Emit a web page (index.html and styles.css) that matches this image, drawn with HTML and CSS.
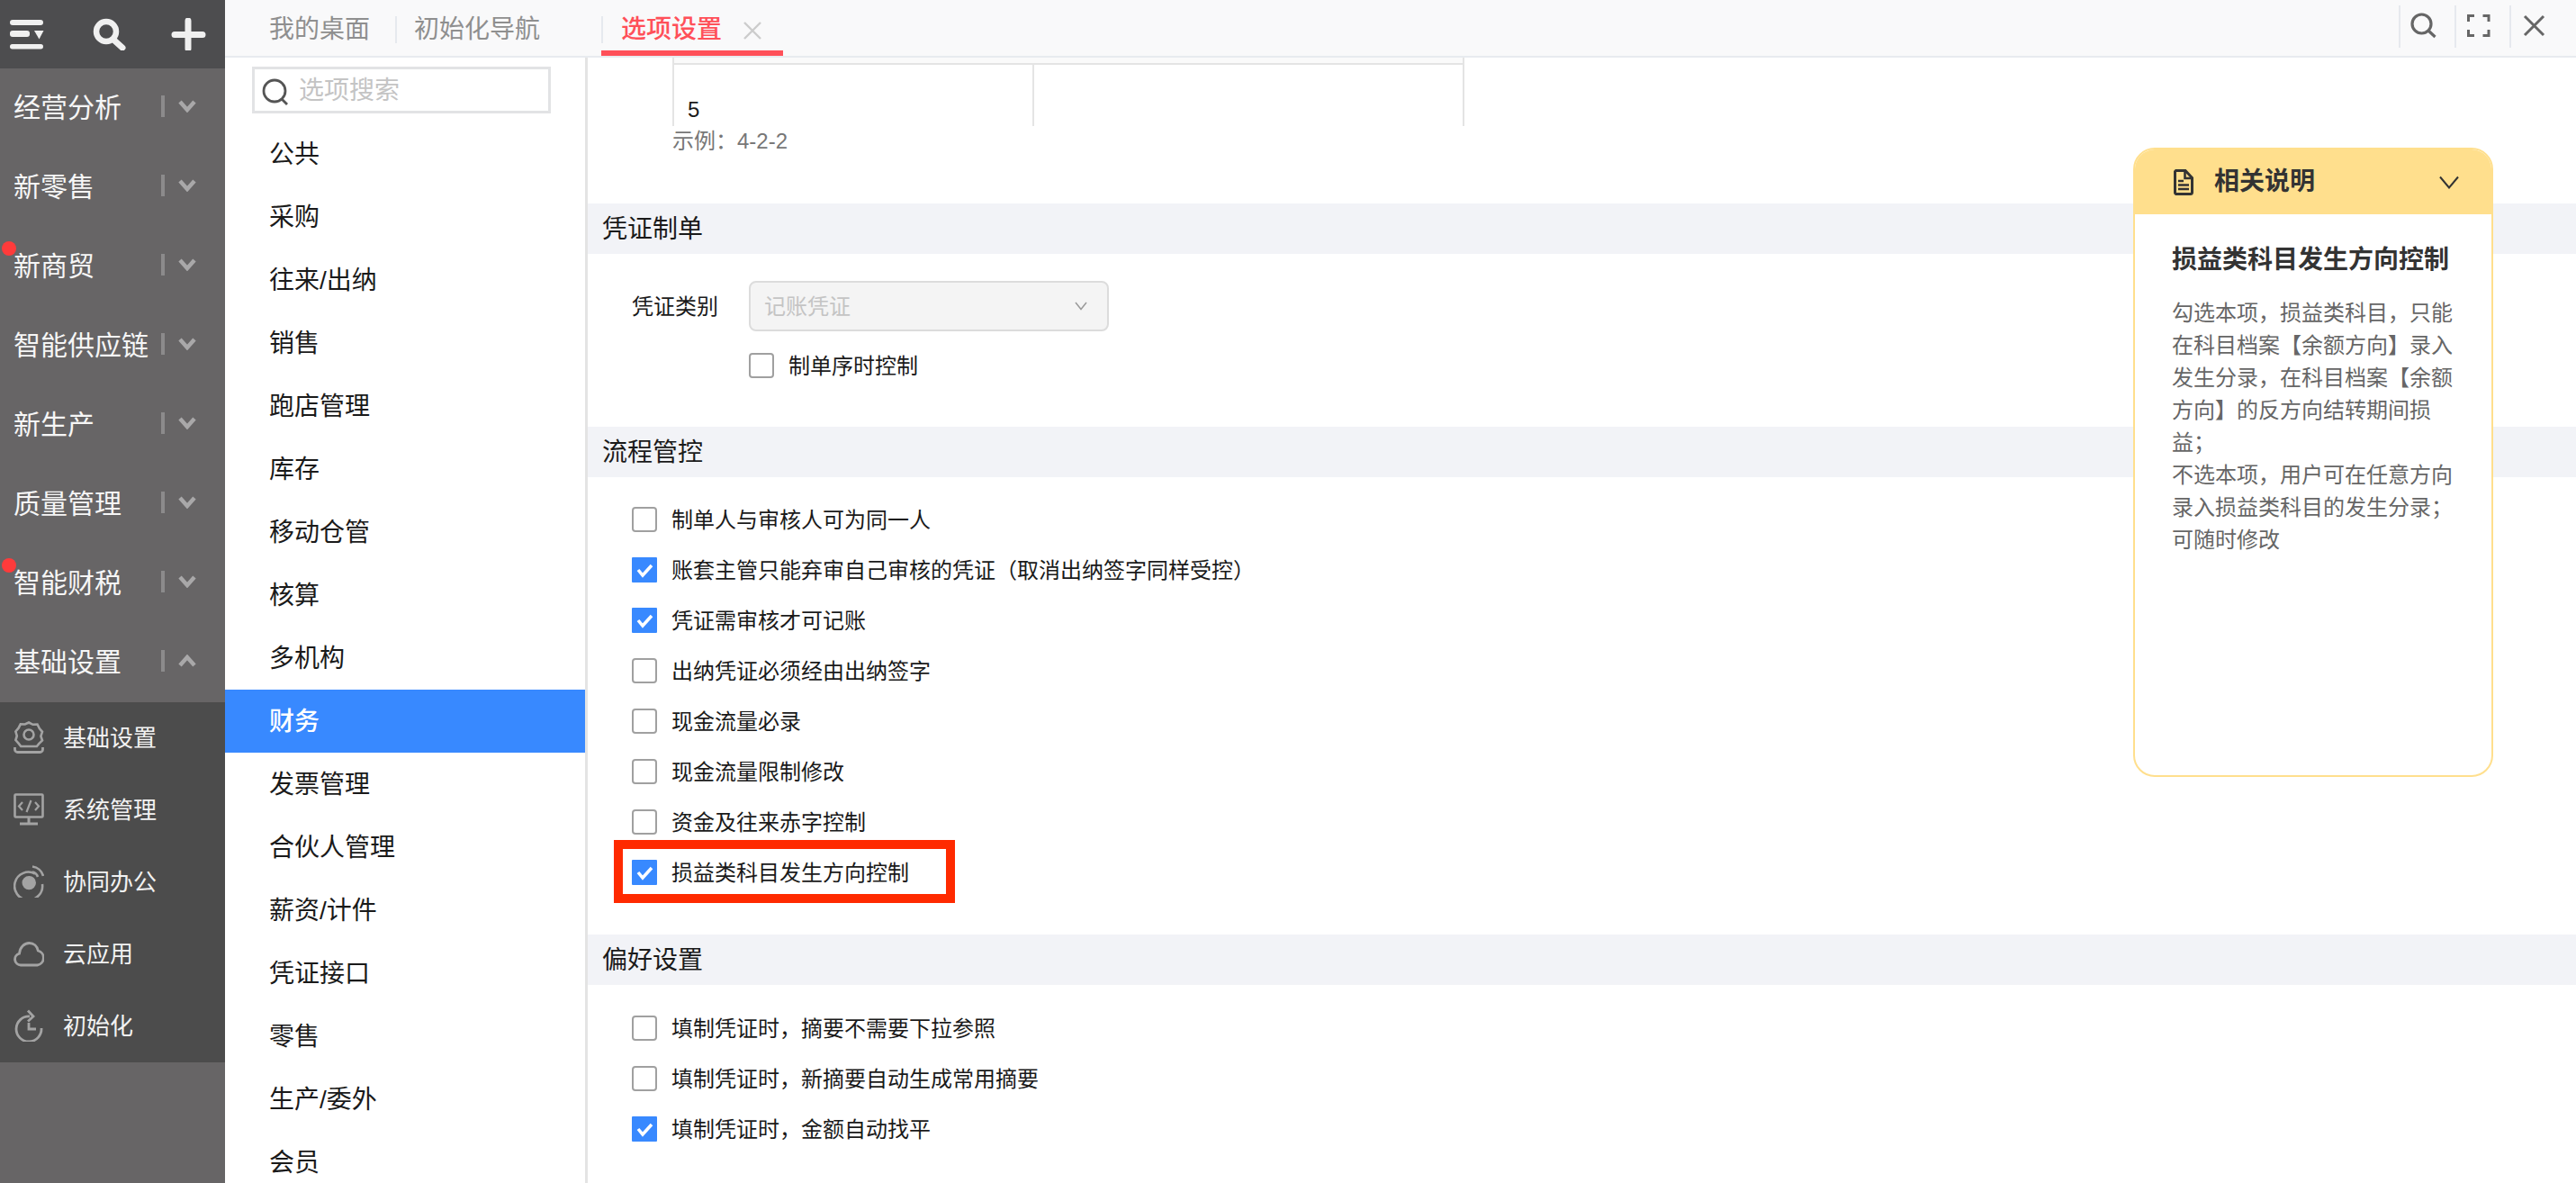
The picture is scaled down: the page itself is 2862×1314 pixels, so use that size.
FILE: index.html
```html
<!DOCTYPE html>
<html lang="zh-CN">
<head>
<meta charset="utf-8">
<title>选项设置</title>
<link rel="stylesheet" href="styles.css">
</head>
<body>
<div class="app">
  <aside class="sidebar">
    <div class="side-top">
      <svg class="top-icon" viewBox="0 0 40 36"><g fill="#f0f0f0"><rect x="1" y="2" width="37" height="6" rx="3"/><rect x="1" y="14" width="22" height="7" rx="3"/><rect x="1" y="29" width="37" height="5.500" rx="2.700"/><path d="M28 14h10.500l-5 9.500z"/></g></svg>
      <svg class="top-icon" viewBox="0 0 40 36"><circle cx="18" cy="15" r="11" fill="none" stroke="#f0f0f0" stroke-width="6.500"/><path d="M26 24l10 9" stroke="#f0f0f0" stroke-width="7" stroke-linecap="round"/></svg>
      <svg class="top-icon" viewBox="0 0 40 36"><path d="M19 3v31M4 18.500h31" stroke="#f0f0f0" stroke-width="7" stroke-linecap="round"/></svg>
    </div>
    <div class="menu-row"><span class="menu-label">经营分析</span><i class="menu-sep"></i><svg class="menu-chev" viewBox="0 0 20 14"><path d="M2 2l8 9 8-9" fill="none" stroke="#a9a8a9" stroke-width="4.500"/></svg></div>
    <div class="menu-row"><span class="menu-label">新零售</span><i class="menu-sep"></i><svg class="menu-chev" viewBox="0 0 20 14"><path d="M2 2l8 9 8-9" fill="none" stroke="#a9a8a9" stroke-width="4.500"/></svg></div>
    <div class="menu-row has-dot"><span class="menu-label">新商贸</span><i class="menu-sep"></i><svg class="menu-chev" viewBox="0 0 20 14"><path d="M2 2l8 9 8-9" fill="none" stroke="#a9a8a9" stroke-width="4.500"/></svg></div>
    <div class="menu-row"><span class="menu-label">智能供应链</span><i class="menu-sep"></i><svg class="menu-chev" viewBox="0 0 20 14"><path d="M2 2l8 9 8-9" fill="none" stroke="#a9a8a9" stroke-width="4.500"/></svg></div>
    <div class="menu-row"><span class="menu-label">新生产</span><i class="menu-sep"></i><svg class="menu-chev" viewBox="0 0 20 14"><path d="M2 2l8 9 8-9" fill="none" stroke="#a9a8a9" stroke-width="4.500"/></svg></div>
    <div class="menu-row"><span class="menu-label">质量管理</span><i class="menu-sep"></i><svg class="menu-chev" viewBox="0 0 20 14"><path d="M2 2l8 9 8-9" fill="none" stroke="#a9a8a9" stroke-width="4.500"/></svg></div>
    <div class="menu-row has-dot"><span class="menu-label">智能财税</span><i class="menu-sep"></i><svg class="menu-chev" viewBox="0 0 20 14"><path d="M2 2l8 9 8-9" fill="none" stroke="#a9a8a9" stroke-width="4.500"/></svg></div>
    <div class="menu-row"><span class="menu-label">基础设置</span><i class="menu-sep"></i><svg class="menu-chev" viewBox="0 0 20 14"><path d="M2 12l8-9 8 9" fill="none" stroke="#a9a8a9" stroke-width="4.500"/></svg></div>
    <div class="submenu">
      <div class="sub-row">
        <svg class="sub-icon" viewBox="0 0 34 36"><g fill="none" stroke="#a3a3a3" stroke-width="2.600"><path d="M17 1.500l4.500 2.300 5-.3 2.300 4.500 3.200 3.800-1.600 4.900 1.600 4.800-3.800 3.600-2.300 2.900H8.200l-2.600-3.400-3.200-3.600 1.400-4.600-1.400-4.900 3.200-3.800 2.200-4.400 5 .2z"/><circle cx="17" cy="15" r="5.500"/><path d="M1.500 29v2.500a3 3 0 0 0 3 3h25a3 3 0 0 0 3-3V29" stroke-width="2.800"/></g></svg>
        <span>基础设置</span>
      </div>
      <div class="sub-row">
        <svg class="sub-icon" viewBox="0 0 34 36"><g fill="none" stroke="#a3a3a3" stroke-width="2.600"><rect x="1.500" y="1.500" width="31" height="25" rx="1"/><path d="M17 27v6M7 34h20" stroke-width="3"/><path d="M10 10l-4 4.500 4 4.500M24 10l4 4.500-4 4.500M19.500 8l-5 13" stroke-width="2.200"/></g></svg>
        <span>系统管理</span>
      </div>
      <div class="sub-row">
        <svg class="sub-icon" viewBox="0 0 34 36"><g fill="none" stroke="#a3a3a3" stroke-width="2.600"><path d="M24 9.500A15.500 15.500 0 1 0 32 21"/><path d="M21 1.500A14 14 0 0 1 33 12"/><path d="M21 7.500A8 8 0 0 1 27 13"/></g><path d="M17 12A7.500 7.500 0 0 1 25 19.500 7.500 7.500 0 1 1 9.500 19.500 7.500 7.500 0 0 1 17 12z" fill="#a3a3a3"/></svg>
        <span>协同办公</span>
      </div>
      <div class="sub-row">
        <svg class="sub-icon" viewBox="0 0 34 36"><path d="M8 31a6.500 6.500 0 0 1-1.500-12.800C7 11 12 6.500 17.500 6.500c5 0 8.800 3.500 9.800 8.500a8.200 8.200 0 0 1-.8 16z" fill="none" stroke="#a3a3a3" stroke-width="2.800"/></svg>
        <span>云应用</span>
      </div>
      <div class="sub-row">
        <svg class="sub-icon" viewBox="0 0 34 36"><g fill="none" stroke="#a3a3a3" stroke-width="2.800"><path d="M18 8A14 14 0 1 0 31 21"/><path d="M16 1.500L22 8l-6 5.500"/><path d="M17 15v7h8"/></g></svg>
        <span>初始化</span>
      </div>
    </div>
  </aside>
  <div class="workspace">
    <header class="tabbar">
      <div class="tab tab-first">我的桌面</div>
      <i class="tab-sep"></i>
      <div class="tab tab-second">初始化导航</div>
      <div class="tab tab-active">
        <span>选项设置</span>
        <svg class="tab-close" viewBox="0 0 20 20"><path d="M1 1l18 18M19 1L1 19" stroke="#cccccc" stroke-width="2.400"/></svg>
      </div>
      <div class="tools">
        <div class="tool"><svg viewBox="0 0 30 30"><circle cx="12.500" cy="12.500" r="10.500" fill="none" stroke="#666" stroke-width="3.200"/><path d="M20.500 20.500l7 6.500" stroke="#666" stroke-width="3.200"/></svg></div>
        <div class="tool"><svg viewBox="0 0 30 30"><path d="M9 3.500H2.500V10M18.500 3.500H25V10M25 19v6.500h-6.500M9 25.500H2.500V19" fill="none" stroke="#666" stroke-width="3"/></svg></div>
        <div class="tool"><svg viewBox="0 0 30 30"><path d="M4 4l21 21M25 4L4 25" stroke="#666" stroke-width="3"/></svg></div>
      </div>
    </header>
    <div class="content">
      <div class="watermarks" aria-hidden="true">
        <div class="wm"><span>袁芊芊8210</span><span class="wm-b">08211022</span></div><div class="wm"><span>袁芊芊8210</span><span class="wm-b">08211022</span></div><div class="wm"><span>袁芊芊8210</span><span class="wm-b">08211022</span></div><div class="wm"><span>袁芊芊8210</span><span class="wm-b">08211022</span></div><div class="wm"><span>袁芊芊8210</span><span class="wm-b">08211022</span></div>
        <div class="wm"><span>袁芊芊8210</span><span class="wm-b">08211022</span></div><div class="wm"><span>袁芊芊8210</span><span class="wm-b">08211022</span></div><div class="wm"><span>袁芊芊8210</span><span class="wm-b">08211022</span></div><div class="wm"><span>袁芊芊8210</span><span class="wm-b">08211022</span></div><div class="wm"><span>袁芊芊8210</span><span class="wm-b">08211022</span></div>
        <div class="wm"><span>袁芊芊8210</span><span class="wm-b">08211022</span></div><div class="wm"><span>袁芊芊8210</span><span class="wm-b">08211022</span></div><div class="wm"><span>袁芊芊8210</span><span class="wm-b">08211022</span></div><div class="wm"><span>袁芊芊8210</span><span class="wm-b">08211022</span></div><div class="wm"><span>袁芊芊8210</span><span class="wm-b">08211022</span></div>
        <div class="wm"><span>袁芊芊8210</span><span class="wm-b">08211022</span></div><div class="wm"><span>袁芊芊8210</span><span class="wm-b">08211022</span></div><div class="wm"><span>袁芊芊8210</span><span class="wm-b">08211022</span></div><div class="wm"><span>袁芊芊8210</span><span class="wm-b">08211022</span></div><div class="wm"><span>袁芊芊8210</span><span class="wm-b">08211022</span></div>
        <div class="wm"><span>袁芊芊8210</span><span class="wm-b">08211022</span></div><div class="wm"><span>袁芊芊8210</span><span class="wm-b">08211022</span></div><div class="wm"><span>袁芊芊8210</span><span class="wm-b">08211022</span></div><div class="wm"><span>袁芊芊8210</span><span class="wm-b">08211022</span></div><div class="wm"><span>袁芊芊8210</span><span class="wm-b">08211022</span></div>
      </div>
      <nav class="catalog">
        <div class="search-box">
          <svg class="search-icon" viewBox="0 0 30 30"><circle cx="14" cy="14" r="12" fill="none" stroke="#555" stroke-width="2.800"/><path d="M22 23l6 6" stroke="#555" stroke-width="2.800"/></svg>
          <span class="placeholder">选项搜索</span>
        </div>
        <ul class="catalog-list">
          <li>公共</li><li>采购</li><li>往来/出纳</li><li>销售</li><li>跑店管理</li><li>库存</li><li>移动仓管</li><li>核算</li><li>多机构</li>
          <li class="current">财务</li>
          <li>发票管理</li><li>合伙人管理</li><li>薪资/计件</li><li>凭证接口</li><li>零售</li><li>生产/委外</li><li>会员</li>
        </ul>
      </nav>
      <main class="options">
        <div class="table-frag">
          <div class="frag-head"></div>
          <div class="frag-cell frag-first">5</div>
          <div class="frag-cell"></div>
        </div>
        <div class="example">示例：4-2-2</div>

        <h2 class="band">凭证制单</h2>
        <section class="voucher">
          <div class="field">
            <label class="field-label">凭证类别</label>
            <div class="select"><span class="select-text">记账凭证</span><svg viewBox="0 0 14 10"><path d="M1 1l6 7.500L13 1" fill="none" stroke="#999" stroke-width="1.500"/></svg></div>
          </div>
          <div class="check-row field-check"><span class="cb"></span><span class="cb-text">制单序时控制</span></div>
        </section>

        <h2 class="band">流程管控</h2>
        <section class="checks checks-flow">
          <div class="check-row"><span class="cb"></span><span class="cb-text">制单人与审核人可为同一人</span></div>
          <div class="check-row"><span class="cb on"><svg viewBox="0 0 28 28"><path d="M7 14l5 6L22 9" fill="none" stroke="#fff" stroke-width="3.500"/></svg></span><span class="cb-text">账套主管只能弃审自己审核的凭证（取消出纳签字同样受控）</span></div>
          <div class="check-row"><span class="cb on"><svg viewBox="0 0 28 28"><path d="M7 14l5 6L22 9" fill="none" stroke="#fff" stroke-width="3.500"/></svg></span><span class="cb-text">凭证需审核才可记账</span></div>
          <div class="check-row"><span class="cb"></span><span class="cb-text">出纳凭证必须经由出纳签字</span></div>
          <div class="check-row"><span class="cb"></span><span class="cb-text">现金流量必录</span></div>
          <div class="check-row"><span class="cb"></span><span class="cb-text">现金流量限制修改</span></div>
          <div class="check-row"><span class="cb"></span><span class="cb-text">资金及往来赤字控制</span></div>
          <div class="check-row marked"><span class="cb on"><svg viewBox="0 0 28 28"><path d="M7 14l5 6L22 9" fill="none" stroke="#fff" stroke-width="3.500"/></svg></span><span class="cb-text">损益类科目发生方向控制</span></div>
        </section>

        <h2 class="band">偏好设置</h2>
        <section class="checks checks-pref">
          <div class="check-row"><span class="cb"></span><span class="cb-text">填制凭证时，摘要不需要下拉参照</span></div>
          <div class="check-row"><span class="cb"></span><span class="cb-text">填制凭证时，新摘要自动生成常用摘要</span></div>
          <div class="check-row"><span class="cb on"><svg viewBox="0 0 28 28"><path d="M7 14l5 6L22 9" fill="none" stroke="#fff" stroke-width="3.500"/></svg></span><span class="cb-text">填制凭证时，金额自动找平</span></div>
        </section>
      </main>
      <aside class="help-card">
        <div class="help-head">
          <svg class="help-doc" viewBox="0 0 22 29"><path d="M2.500 1.500h10.500l7.500 8v16a2 2 0 0 1-2 2h-16a2 2 0 0 1-1-2v-23z" fill="none" stroke="#333" stroke-width="3"/><path d="M12.500 2v8h8M5 13h6M5 17.500h12M5 22h12" fill="none" stroke="#333" stroke-width="2.600"/></svg>
          <span class="help-title">相关说明</span>
          <svg class="help-chev" viewBox="0 0 22 15"><path d="M1 1.500l10 12 10-12" fill="none" stroke="#333" stroke-width="2"/></svg>
        </div>
        <div class="help-body">
          <h3>损益类科目发生方向控制</h3>
          <p>勾选本项，损益类科目，只能在科目档案【余额方向】录入发生分录，在科目档案【余额方向】的反方向结转期间损益；<br>不选本项，用户可在任意方向录入损益类科目的发生分录；<br>可随时修改</p>
        </div>
      </aside>
    </div>
  </div>
</div>
</body>
</html>
```

FILE: styles.css
```css
* { box-sizing: border-box; }
html, body { margin: 0; padding: 0; height: 100%; }
body {
  font-family: "Liberation Sans", "Noto Sans CJK SC", sans-serif;
  background: #fff;
  color: #1a1a1a;
  overflow: hidden;
}
h2, h3, p, ul { margin: 0; padding: 0; font-weight: normal; }
ul { list-style: none; }
i { display: block; }

.app { display: flex; width: 2862px; height: 1314px; overflow: hidden; }

/* sidebar */
.sidebar { width: 250px; flex: none; background: #676566; color: #fff; }
.side-top {
  height: 76px;
  background: #4d4d4f;
  display: flex;
  align-items: center;
  gap: 50px;
  padding: 0 0 0 10px;
}
.top-icon { width: 40px; height: 36px; flex: none; }
.menu-row {
  position: relative;
  height: 88px;
  display: flex;
  align-items: center;
  padding: 0 32px 4px 15px;
  font-size: 30px;
  line-height: 40px;
}
.menu-label { flex: 1; white-space: nowrap; color: #f6f6f6; padding-top: 4px; }
.menu-sep { width: 4px; height: 24px; background: #8c8b8c; margin-right: 15px; }
.menu-chev { width: 20px; height: 14px; flex: none; }
.has-dot::before {
  content: "";
  position: absolute;
  left: 2px;
  top: 16px;
  width: 16px;
  height: 16px;
  border-radius: 50%;
  background: #ff3b3b;
}
.submenu { background: #4c4c4c; }
.sub-row {
  height: 80px;
  display: flex;
  align-items: center;
  gap: 21px;
  padding-left: 15px;
  font-size: 26px;
  color: #f2f2f2;
  padding-bottom: 2px;
}
.sub-row span { padding-bottom: 4px; }
.sub-icon { width: 34px; height: 36px; flex: none; }

/* tabs */
.workspace { flex: 1; min-width: 0; display: flex; flex-direction: column; }
.tabbar {
  height: 64px;
  flex: none;
  display: flex;
  background: #f9f9fa;
  border-bottom: 2px solid #e8ebef;
  font-size: 28px;
  color: #8f8f8f;
}
.tab { height: 62px; line-height: 66px; white-space: nowrap; }
.tab-first { padding: 0 28px 0 49px; }
.tab-sep { width: 2px; height: 30px; margin-top: 18px; background: #e6e9ee; }
.tab-second { padding: 0 68px 0 19px; }
.tab-active {
  position: relative;
  width: 202px;
  padding-left: 22px;
  display: flex;
  color: #ff5059;
  border-bottom: 6px solid #ff5059;
  font-weight: 500;
}
.tab-active::before {
  content: "";
  position: absolute;
  left: 0;
  top: 18px;
  width: 2px;
  height: 30px;
  background: #e6e9ee;
}
.tab-close { width: 20px; height: 20px; margin: 24px 0 0 24px; flex: none; }
.tools { margin-left: auto; display: flex; height: 47px; margin-top: 6px; }
.tool { border-left: 2px solid #e6e9ee; padding: 8px 0 0 11px; }
.tool:nth-child(1) { width: 62px; }
.tool:nth-child(2) { width: 61px; }
.tool:nth-child(3) { width: 74px; }
.tool svg { width: 30px; height: 30px; display: block; }

/* content */
.content { position: relative; flex: 1; min-height: 0; display: flex; overflow: hidden; }
.watermarks {
  position: absolute;
  left: -332px;
  top: -23px;
  z-index: 1;
  display: grid;
  grid-template-columns: repeat(5, 620px);
  grid-auto-rows: 260px;
  pointer-events: none;
}
.wm {
  justify-self: end;
  width: max-content;
  height: 132px;
  transform: rotate(-20deg);
  transform-origin: 100% 0;
  text-align: right;
  font-size: 40px;
  line-height: 66px;
  color: rgba(0, 0, 0, 0.025);
  white-space: nowrap;
}
.wm span { display: block; }
.wm-b { padding-right: 22px; }

.catalog {
  width: 403px;
  flex: none;
  border-right: 3px solid #e4e4e4;
  padding-top: 10px;
}
.search-box {
  width: 332px;
  height: 52px;
  margin-left: 30px;
  border: 3px solid #e2e3e5;
  display: flex;
  align-items: center;
  gap: 11px;
  padding-left: 8px;
  font-size: 28px;
  color: #c4c4c4;
}
.placeholder { padding-bottom: 4px; }
.search-icon { width: 30px; height: 30px; flex: none; margin-top: 3px; }
.catalog-list { margin-top: 10px; }
.catalog-list li {
  height: 70px;
  line-height: 72px;
  padding-left: 49px;
  font-size: 28px;
  color: #1a1a1a;
}
.catalog-list .current { background: #3889ff; color: #fff; font-weight: 500; }

.options { flex: 1; min-width: 0; }
.table-frag {
  width: 880px;
  height: 76px;
  margin-left: 94px;
  display: grid;
  grid-template-columns: 400px 1fr;
  grid-template-rows: 8px 1fr;
  border-left: 2px solid #e4e4e4;
  border-right: 2px solid #e4e4e4;
  font-size: 24px;
  color: #1a1a1a;
}
.frag-head { grid-column: 1 / 3; border-bottom: 2px solid #e4e4e4; background: #fafafa; }
.frag-cell { padding: 35px 0 0 15px; line-height: 30px; }
.frag-first { border-right: 2px solid #e4e4e4; }
.example {
  height: 86px;
  padding: 0 0 0 94px;
  font-size: 24px;
  line-height: 34px;
  color: #777;
}
.band {
  height: 56px;
  padding-left: 16px;
  background: #f2f3f7;
  font-size: 28px;
  line-height: 58px;
  color: #1a1a1a;
}
.voucher { height: 192px; padding: 30px 0 0 49px; }
.field { display: flex; align-items: center; height: 56px; }
.field-label { width: 130px; font-size: 24px; color: #1a1a1a; padding-bottom: 4px; }
.select {
  width: 400px;
  height: 56px;
  display: flex;
  align-items: center;
  justify-content: space-between;
  padding: 0 22px 0 15px;
  background: #f4f4f4;
  border: 2px solid #dcdcdc;
  border-radius: 8px;
  font-size: 24px;
  color: #c4c4c4;
}
.select-text { padding-bottom: 4px; }
.select svg { width: 14px; height: 10px; }
.check-row {
  position: relative;
  height: 56px;
  display: flex;
  align-items: center;
  gap: 16px;
  font-size: 24px;
  color: #1a1a1a;
  white-space: nowrap;
}
.cb-text { padding-bottom: 4px; }
.field-check { margin: 10px 0 0 130px; }
.cb {
  width: 28px;
  height: 28px;
  flex: none;
  border: 2px solid #a0a0a0;
  border-radius: 4px;
  background: #fff;
}
.cb.on { border: 0; border-radius: 1px; background: #3889ff; }
.cb svg { width: 28px; height: 28px; display: block; }
.checks { padding-left: 49px; }
.checks-flow { height: 508px; padding-top: 19px; }
.checks-pref { padding-top: 20px; }
.marked::after {
  content: "";
  position: absolute;
  left: -20px;
  top: -8px;
  box-sizing: border-box;
  width: 379px;
  height: 70px;
  border: 10px solid #ff2a00;
}

/* help card */
.help-card {
  position: absolute;
  right: 92px;
  top: 100px;
  z-index: 2;
  width: 400px;
  height: 699px;
  background: #fff;
  border: 2px solid #ffdf8d;
  border-radius: 24px;
  overflow: hidden;
}
.help-head {
  height: 72px;
  background: #ffdf8d;
  display: flex;
  align-items: center;
  padding-left: 43px;
  color: #333;
}
.help-doc { width: 22px; height: 29px; flex: none; }
.help-title { margin-left: 23px; font-size: 28px; font-weight: 700; line-height: 36px; flex: 1; }
.help-chev { width: 22px; height: 15px; margin-right: 36px; flex: none; }
.help-body { padding: 33px 0 0 41px; width: 360px; }
.help-body h3 { font-size: 28px; line-height: 36px; font-weight: 700; color: #333; white-space: nowrap; }
.help-body p { margin-top: 23px; width: 316px; font-size: 24px; line-height: 36px; color: #666; }
```
